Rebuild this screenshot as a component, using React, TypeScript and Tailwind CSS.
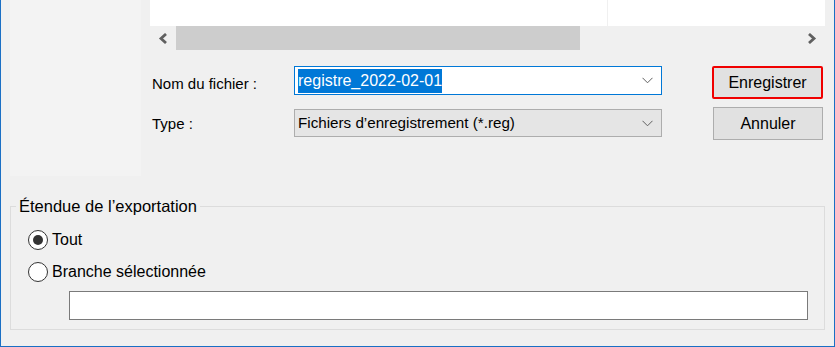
import React from 'react';

function Chevron() {
  return (
    <svg width="11" height="7" viewBox="0 0 11 7" className="shrink-0">
      <path d="M0.5 0.8 L5.5 5.8 L10.5 0.8" fill="none" stroke="#606060" strokeWidth="1" />
    </svg>
  );
}

function ScrollArrow({ dir }: { dir: 'left' | 'right' }) {
  const d = dir === 'left' ? 'M8 1 L3 5.5 L8 10' : 'M2 1 L7 5.5 L2 10';
  return (
    <svg width="10" height="11" viewBox="0 0 10 11">
      <path d={d} fill="none" stroke="#606060" strokeWidth="2.8" />
    </svg>
  );
}

function Radio({ checked, label }: { checked?: boolean; label: string }) {
  return (
    <div className="flex items-center h-[20px] gap-[4px]">
      <div className="w-[20px] h-[20px] rounded-full border-[1.5px] border-[#333] bg-white flex items-center justify-center">
        {checked && <div className="w-[10px] h-[10px] rounded-full bg-[#333]" />}
      </div>
      <span className="text-[16px] leading-[20px]">{label}</span>
    </div>
  );
}

export default function App() {
  return (
    <div className="w-[835px] h-[347px] bg-[#f0f0f0] border-x border-b border-[#1a6fc4] overflow-hidden font-['Liberation_Sans',Arial,sans-serif] text-[#000]">
      <div className="pl-[9px] pr-[9px]">
        {/* partie haute */}
        <div className="flex h-[176px]">
          <div className="w-[131px] bg-[#f3f3f3]" />
          <div className="ml-[9px] flex-1 flex flex-col">
            <div className="flex h-[26px]">
              <div className="w-[458px] bg-white border-r border-[#f0f0f0]" />
              <div className="flex-1 bg-white" />
            </div>

            {/* barre de défilement */}
            <div className="flex h-[24px] items-center">
              <div className="w-[26px] flex justify-center">
                <ScrollArrow dir="left" />
              </div>
              <div className="w-[404px] h-full bg-[#cdcdcd]" />
              <div className="flex-1" />
              <div className="w-[26px] flex justify-center">
                <ScrollArrow dir="right" />
              </div>
            </div>

            {/* nom du fichier */}
            <div className="flex h-[41px] mt-[16px]">
              <div className="w-[144px] pl-[2px] pt-[9px] text-[15px] leading-[17px]">Nom du fichier :</div>
              <div className="w-[368px] h-[29px] border border-[#0078d7] bg-white flex items-center pl-[3px] pr-[8px]">
                <span className="bg-[#0078d7] text-white text-[16px] leading-[24px]">registre_2022-02-01</span>
                <div className="flex-1" />
                <Chevron />
              </div>
              <button className="ml-[50px] w-[111px] h-[33px] border-2 border-[#f00000] rounded-[2px] bg-[#e1e1e1] text-[16px] leading-[20px]">
                Enregistrer
              </button>
            </div>

            {/* type */}
            <div className="flex">
              <div className="w-[144px] pl-[2px] pt-[8px] text-[15px] leading-[17px]">Type :</div>
              <div className="mt-[2px] w-[368px] h-[28px] border border-[#adadad] bg-[#e5e5e5] flex items-center pl-[3px] pr-[8px]">
                <span className="text-[15.2px] leading-[20px]">Fichiers d’enregistrement (*.reg)</span>
                <div className="flex-1" />
                <Chevron />
              </div>
              <button className="ml-[51px] w-[110px] h-[33px] border border-[#adadad] bg-[#e1e1e1] text-[16px] leading-[20px]">
                Annuler
              </button>
            </div>
          </div>
        </div>

        {/* étendue de l'exportation */}
        <div className="relative mt-[30px] h-[124px] border border-[#dcdcdc]">
          <div className="absolute -top-[10px] left-[5px] px-[3px] bg-[#f0f0f0] text-[16.5px] leading-[18px]">
            Étendue de l’exportation
          </div>
          <div className="pl-[17px] pt-[23px]">
            <Radio checked label="Tout" />
            <div className="mt-[12px]">
              <Radio label="Branche sélectionnée" />
            </div>
          </div>
          <div className="ml-[58px] mt-[9px] w-[739px] h-[29px] border border-[#7a7a7a] bg-white" />
        </div>
      </div>
    </div>
  );
}
